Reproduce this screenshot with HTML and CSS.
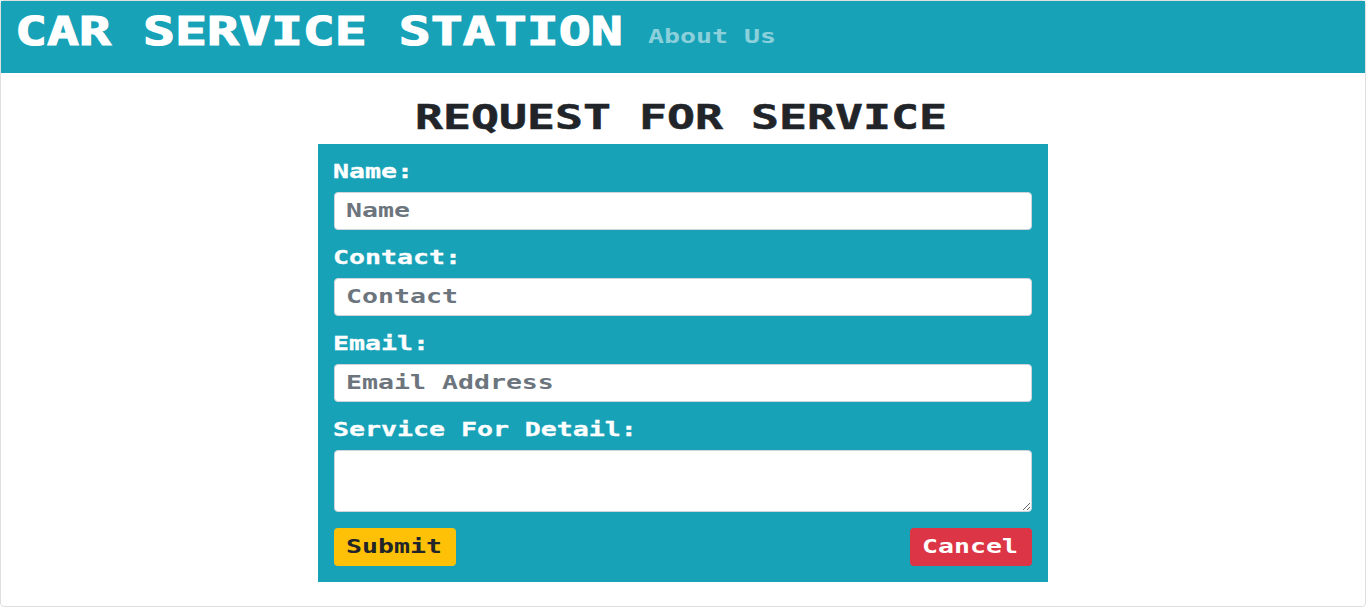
FILE: index.html
```html
<!DOCTYPE html>
<html lang="en">
<head>
<meta charset="utf-8">
<title>Car Service Station</title>
<link rel="stylesheet" href="styles.css">
</head>
<body>
<div class="card">
  <nav class="navbar">
    <a class="brand"><span class="wide">CAR SERVICE STATION</span></a>
    <a class="nav-link"><span class="wide">About Us</span></a>
  </nav>
  <main>
    <h1 class="title"><span class="wide">REQUEST FOR SERVICE</span></h1>
    <form class="form">
      <label class="label" for="name"><span class="wide">Name:</span></label>
      <div class="control"><input class="input wide" id="name" placeholder="Name"></div>
      <label class="label" for="contact"><span class="wide">Contact:</span></label>
      <div class="control"><input class="input wide" id="contact" placeholder="Contact"></div>
      <label class="label" for="email"><span class="wide">Email:</span></label>
      <div class="control"><input class="input wide" id="email" placeholder="Email Address"></div>
      <label class="label" for="detail"><span class="wide">Service For Detail:</span></label>
      <textarea class="textarea" id="detail"></textarea>
      <div class="actions">
        <button class="btn submit" type="button"><span class="wide">Submit</span></button>
        <button class="btn cancel" type="button"><span class="wide">Cancel</span></button>
      </div>
    </form>
  </main>
</div>
</body>
</html>
```

FILE: styles.css
```css
* { box-sizing: border-box; }
body {
  margin: 0;
  background: #fff;
  color: #212529;
  font: bold 19.2px/24px "DejaVu Sans Mono", monospace;
}
.card {
  height: 607px;
  border: 1px solid #dfdfdf;
  border-radius: 4px;
}
.wide {
  display: inline-block;
  white-space: pre;
  transform: scaleX(1.384);
  transform-origin: left center;
}
.navbar {
  display: flex;
  height: 72px;
  padding: 0 14px;
  background: #18a2b8;
}
.brand {
  width: 608px;
  margin-right: 25px;
  padding-top: 6px;
  color: #fff;
  font-size: 39.5px;
  line-height: 48px;
  -webkit-text-stroke: 1.2px #fff;
}
.brand .wide { transform: scaleX(1.345); }
.nav-link {
  padding-top: 24px;
  color: rgba(255, 255, 255, .5);
}
.title {
  width: 536px;
  margin: 25px auto 6px;
  font-size: 33px;
  line-height: 40px;
  -webkit-text-stroke: .5px #212529;
}
.title .wide { transform: scaleX(1.409); }
.form {
  width: 730px;
  margin: 0 auto;
  padding: 16px;
  background: #18a2b8;
}
.label {
  display: block;
  height: 24px;
  margin-bottom: 8px;
  color: #fff;
  -webkit-text-stroke: .3px #fff;
}
.label .wide { margin-left: -1px; }
.control {
  height: 38px;
  margin-bottom: 16px;
  padding-left: 11px;
  background: #fff;
  border: 1px solid #ced4da;
  border-radius: 4px;
  overflow: hidden;
}
.input {
  display: block;
  width: 480px;
  height: 34px;
  padding: 0;
  border: 0;
  outline: 0;
  background: transparent;
  color: #495057;
  font: inherit;
}
.input::placeholder { color: #6c757d; opacity: 1; }
.textarea {
  display: block;
  width: 100%;
  height: 62px;
  margin: 0 0 16px;
  padding: 6px 12px;
  border: 1px solid #ced4da;
  border-radius: 4px;
  background: #fff;
  font: inherit;
  resize: vertical;
}
.actions {
  display: flex;
  justify-content: space-between;
}
.btn {
  width: 122px;
  height: 38px;
  padding: 0 0 0 12px;
  border: 0;
  border-radius: 4px;
  font: inherit;
  text-align: left;
}
.submit { background: #ffc107; color: #212529; }
.cancel { background: #dc3545; color: #fff; }
```
